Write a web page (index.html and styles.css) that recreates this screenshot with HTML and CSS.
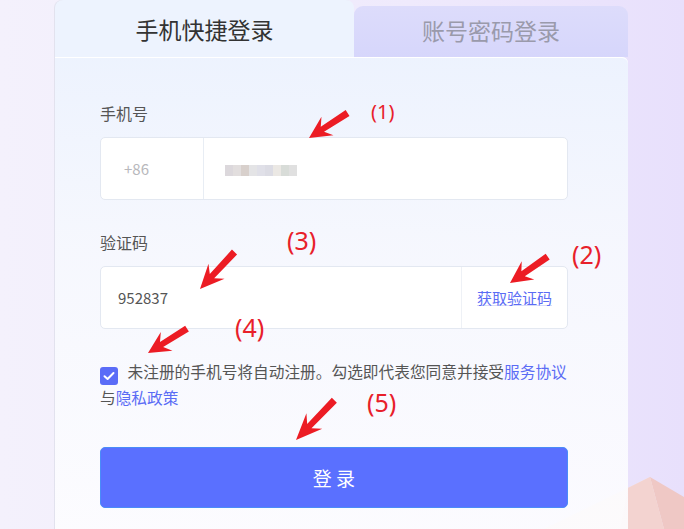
FILE: index.html
```html
<!DOCTYPE html>
<html lang="zh-CN">
<head>
  <meta charset="UTF-8">
  <title>手机快捷登录</title>
  <link rel="stylesheet" href="styles.css">
</head>
<body>

<!-- background shapes, bottom right -->
<svg class="deco" width="160" height="60" viewBox="0 0 160 60">
  <polygon points="20,60 126,8 140,60" fill="#f6e2dc"/>
  <polygon points="126,8 160,28 160,60 140,60" fill="#efc8c5"/>
  <polygon points="104,19 126,8 140,60 96,60" fill="#f3d3d0"/>
</svg>

<div class="card">
  <div class="tabs">
    <div class="tab active">手机快捷登录</div>
    <div class="tab">账号密码登录</div>
  </div>

  <div class="panel">
    <div class="label">手机号</div>
    <div class="field">
      <div class="prefix">+86</div>
      <div class="value blur">
        <span style="background:#dcd8dc"></span><span style="background:#e2dede"></span><span style="background:#d8d0cc"></span><span style="background:#e4e4e6"></span><span style="background:#e0e0e8"></span><span style="background:#dcdce4"></span><span style="background:#ebe8e4"></span><span style="background:#d8dcd8"></span><span style="background:#e0e0e0"></span>
      </div>
    </div>

    <div class="label">验证码</div>
    <div class="field">
      <div class="value">952837</div>
      <div class="suffix">获取验证码</div>
    </div>

    <div class="agree">
      <span class="check">
        <svg width="12" height="10" viewBox="0 0 12 10"><path d="M1.5 5.2 L4.6 8 L10.5 2" fill="none" stroke="#fff" stroke-width="2" stroke-linecap="round" stroke-linejoin="round"/></svg>
      </span>
      未注册的手机号将自动注册。勾选即代表您同意并接受<a>服务协议</a><br>与<a>隐私政策</a>
    </div>

    <button class="button">登 录</button>
  </div>
</div>

<!-- red annotation marks -->
<svg class="marks" width="684" height="529" viewBox="0 0 684 529">
  <defs>
    <g id="arrow">
      <polygon points="0,0 -22,-11 -16,-3 -46,-3.5 -46,3.5 -16,3 -22,11" fill="#ec1c24"/>
    </g>
  </defs>
  <use href="#arrow" transform="translate(309,138) rotate(147)"/>
  <use href="#arrow" transform="translate(200,289) rotate(133) scale(1.1,1)"/>
  <use href="#arrow" transform="translate(510,283) rotate(145)"/>
  <use href="#arrow" transform="translate(148,353) rotate(148)"/>
  <use href="#arrow" transform="translate(296,440) rotate(134) scale(1.2,1)"/>
</svg>
<div class="mark m1">(1)</div>
<div class="mark m2">(2)</div>
<div class="mark m3">(3)</div>
<div class="mark m4">(4)</div>
<div class="mark m5">(5)</div>

</body>
</html>
```

FILE: styles.css
```css
body {
  margin: 0;
  height: 529px;
  overflow: hidden;
  position: relative;
  font-family: "Noto Sans CJK SC", "Noto Sans", sans-serif;
  background: linear-gradient(90deg, #f4f1fc 0%, #efeafc 60%, #e8e0fc 100%);
}

.deco {
  position: absolute;
  right: 0;
  bottom: 0;
}

.card {
  position: relative;
  margin-left: 55px;
  width: 573px;
  height: 529px;
  display: flex;
  flex-direction: column;
}

.tabs {
  display: flex;
  height: 57px;
}

.tab {
  flex: 1;
  margin-top: 6px;
  display: flex;
  align-items: center;
  justify-content: center;
  font-size: 23px;
  color: #9a9aab;
  background: linear-gradient(180deg, #dddcfb, #d6d6fb);
  border-radius: 9px 9px 0 0;
  padding-bottom: 4px;
}

.tab.active {
  flex: none;
  width: 299px;
  margin-top: 0;
  padding-bottom: 0;
  color: #333;
  background: #edf3fe;
  border-radius: 8px 8px 0 0;
  box-shadow: -1px 0 0 #e2e2ee;
}

.panel {
  flex: 1;
  padding: 44px 60px 0 45px;
  background: linear-gradient(180deg, rgba(237, 243, 254, 0.97) 0%, rgba(246, 248, 254, 0.95) 40%, rgba(253, 253, 255, 0.9) 100%);
  border-radius: 0 6px 0 0;
  box-shadow: -1px 0 0 #e2e2ee, inset 0 1px 0 #fff;
}

.label {
  font-size: 16px;
  line-height: 24px;
  color: #555;
  margin-bottom: 12px;
}

.field {
  display: flex;
  height: 61px;
  border: 1px solid #e3e8f1;
  border-radius: 5px;
  background: #fff;
  margin-bottom: 30px;
  font-size: 15px;
}

.prefix {
  width: 103px;
  border-right: 1px solid #e8edf4;
  display: flex;
  align-items: center;
  padding-left: 23px;
  box-sizing: border-box;
  color: #b8b8bc;
}

.value {
  flex: 1;
  display: flex;
  align-items: center;
  padding-left: 17px;
  color: #555;
}

.blur {
  padding-left: 21px;
}

.blur span {
  display: inline-block;
  width: 8px;
  height: 11px;
  margin-top: 4px;
}

.suffix {
  width: 105px;
  border-left: 1px solid #eef1f6;
  display: flex;
  align-items: center;
  justify-content: center;
  color: #5b6cf5;
  text-decoration: underline;
  text-decoration-color: #d8dcf8;
}

.agree {
  font-size: 15.7px;
  line-height: 25px;
  color: #555;
  white-space: nowrap;
}

.agree a {
  color: #5b6cf5;
}

.check {
  display: inline-flex;
  align-items: center;
  justify-content: center;
  width: 18px;
  height: 18px;
  background: #5a6cf7;
  border-radius: 3px;
  vertical-align: -3px;
  margin-right: 6px;
}

.button {
  display: block;
  width: 100%;
  height: 61px;
  margin-top: 37px;
  background-color: #5a70ff;
  color: #fff;
  font-family: inherit;
  font-size: 19px;
  border: 1px solid #4a8cf8;
  border-radius: 5px;
  cursor: pointer;
}

.marks {
  position: absolute;
  left: 0;
  top: 0;
  pointer-events: none;
}

.mark {
  position: absolute;
  color: #e8202a;
  font-family: "Noto Sans", sans-serif;
  font-size: 25px;
  line-height: 1;
}

.m1 { left: 371px; top: 102px; font-size: 20px; }
.m2 { left: 572px; top: 242px; }
.m3 { left: 287px; top: 228px; }
.m4 { left: 235px; top: 315px; }
.m5 { left: 367px; top: 390px; }
```
